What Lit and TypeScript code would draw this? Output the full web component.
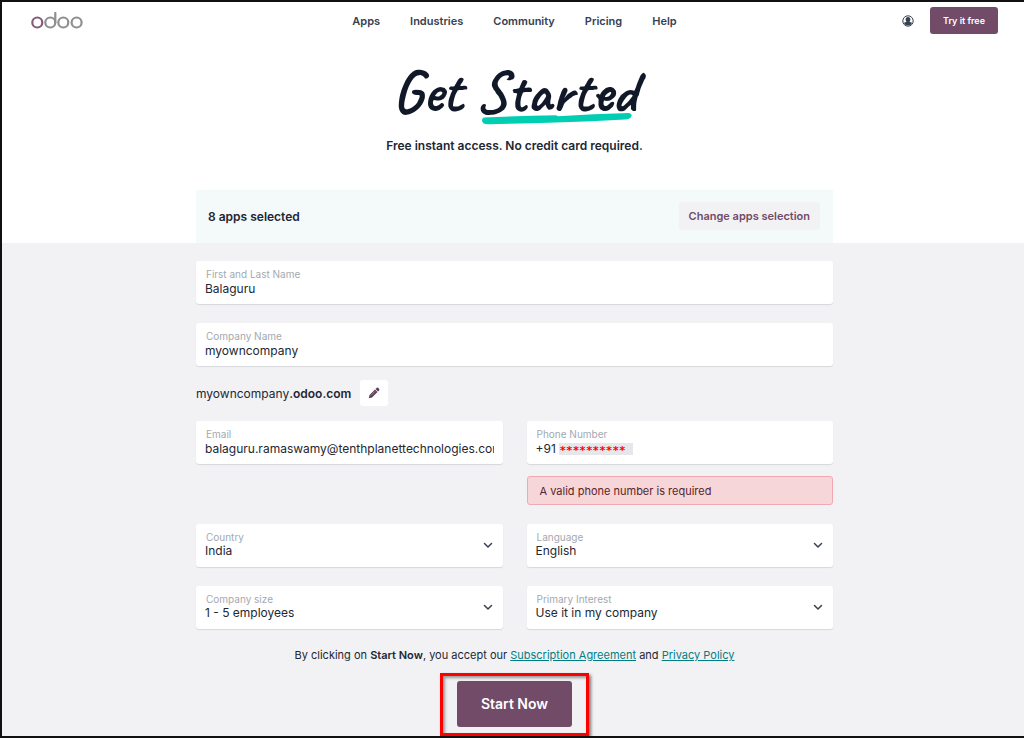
import { LitElement, html, css } from "lit";
import { customElement, property } from "lit/decorators.js";

const fieldStyles = css`
  * {
    box-sizing: border-box;
  }
  .field {
    display: block;
    padding: 7px 9px;
    border-radius: 3px;
    background: #fff;
    box-shadow: 0 1px 1px #d5d8dc;
  }
  .caption {
    display: block;
    padding-left: 1px;
    font-size: 10px;
    line-height: 13px;
    color: #a3a9b1;
  }
  .control {
    display: block;
    width: 100%;
    height: 16px;
    margin: 0;
    padding: 0;
    border: 0;
    outline: 0;
    border-radius: 0;
    background: transparent;
    font: 400 12px/16px Inter, sans-serif;
    color: #212733;
  }
`;

@customElement("text-field")
export class TextField extends LitElement {
  @property() label = "";
  @property() value = "";
  @property() type = "text";

  static styles = [fieldStyles, css`:host { display: block; }`];

  render() {
    return html`<label class="field" for="control">
      <span class="caption">${this.label}</span>
      <input class="control" id="control" type=${this.type} .value=${this.value} />
    </label>`;
  }
}

@customElement("phone-field")
export class PhoneField extends LitElement {
  static styles = [
    fieldStyles,
    css`
      :host {
        display: block;
      }
      .row {
        display: flex;
        align-items: center;
      }
      .prefix {
        width: 23px;
        flex: none;
      }
      .mask {
        height: 12px;
        padding: 0 7px 0 1px;
        background: #e6e7ea;
        color: #f00;
        font: 700 11px/16px "DejaVu Sans Mono", monospace;
      }
    `,
  ];

  render() {
    return html`<div class="field">
      <label class="caption" for="phone">Phone Number</label>
      <div class="row">
        <input class="control prefix" id="phone" type="tel" .value=${"+91"} />
        <span class="mask">**********</span>
      </div>
    </div>`;
  }
}

@customElement("select-field")
export class SelectField extends LitElement {
  @property() label = "";
  @property() value = "";

  static styles = [
    fieldStyles,
    css`
      :host {
        display: block;
      }
      .field {
        display: grid;
        grid-template-columns: 1fr 10px;
        align-items: center;
        padding: 7px 10px 9px 9px;
      }
      .caption,
      .control {
        grid-column: 1;
      }
      .control {
        appearance: none;
        height: 14px;
        line-height: 14px;
      }
      .chevron {
        grid-column: 2;
        grid-row: 1 / 3;
        width: 10px;
        height: 8px;
      }
    `,
  ];

  render() {
    return html`<label class="field" for="control">
      <span class="caption">${this.label}</span>
      <select class="control" id="control">
        <option>${this.value}</option>
      </select>
      <svg class="chevron" viewBox="0 0 10 8" fill="none">
        <path d="M1.500 2.500 5 6 8.500 2.500" stroke="#374151" stroke-width="1.500" stroke-linecap="round" stroke-linejoin="round" />
      </svg>
    </label>`;
  }
}

const logo = html`<svg class="logo" viewBox="0 0 52 18" fill="none" stroke-width="2.2">
  <g stroke="#8f8f8f">
    <circle cx="19.3" cy="10.500" r="5" />
    <path d="M24.300 1v9.500" stroke-linecap="round" />
    <circle cx="32.300" cy="10.500" r="5" />
    <circle cx="45.600" cy="10.500" r="5" />
  </g>
  <circle cx="6.300" cy="10.500" r="5" stroke="#875a7b" />
</svg>`;

const userIcon = html`<svg class="user" viewBox="0 0 12 12">
  <circle cx="6" cy="6" r="5.2" fill="#fff" stroke="#374151" stroke-width="1" />
  <path d="M6 2.100c1.500 0 2.400 1 2.400 2.400 0 1-.5 1.900-1.100 2.300.9.300 2.200.6 2.800 1.300A4.600 4.600 0 0 1 6 10.600a4.600 4.600 0 0 1-4.100-2.500c.6-.7 1.900-1 2.800-1.300-.6-.4-1.100-1.300-1.100-2.300 0-1.400.9-2.400 2.400-2.400Z" fill="#374151" />
</svg>`;

const pencil = html`<svg class="pencil" viewBox="0 0 12 12" fill="#5f3d57">
  <path d="M.8 11.200 1.500 8 7 2.500 9.500 5 4 10.500Z" />
  <path d="M7.500 2 8.800.8q.7-.5 1.300 0l1.100 1.100q.5.6 0 1.300L10 4.500Z" />
  <path d="m2.900 8.500 4.200-4.200" stroke="#c9b7c4" stroke-width=".6" />
</svg>`;

const links = ["Apps", "Industries", "Community", "Pricing", "Help"];

@customElement("app-root")
export class AppRoot extends LitElement {
  static styles = css`
    * {
      box-sizing: border-box;
    }
    :host {
      display: flex;
      flex-direction: column;
      min-height: 100vh;
      box-sizing: border-box;
      border: 2px solid #111;
      border-right: 0;
      background: #f2f2f5;
      font-family: Inter, sans-serif;
      color: #212733;
      overflow: hidden;
    }
    .top {
      background: #fff;
      padding-left: 3px;
    }
    .bar {
      display: grid;
      grid-template-columns: 1fr auto 1fr;
      align-items: center;
      padding: 5px 26px 0;
    }
    .logo {
      width: 52px;
      height: 18px;
      display: block;
    }
    .nav {
      display: flex;
      gap: 30px;
    }
    .nav a {
      font-size: 11px;
      line-height: 16px;
      font-weight: 600;
      color: #374151;
      text-decoration: none;
    }
    .actions {
      display: flex;
      justify-content: flex-end;
      align-items: center;
      gap: 16px;
    }
    button {
      border: 0;
      margin: 0;
      font-family: inherit;
      border-radius: 3px;
    }
    .account {
      padding: 0;
      background: none;
    }
    .user {
      display: block;
      width: 12px;
      height: 12px;
    }
    .try {
      padding: 6px 13px;
      background: #714b67;
      color: #fff;
      font-size: 9px;
      line-height: 15px;
      font-weight: 600;
    }
    .hero {
      display: flex;
      flex-direction: column;
      align-items: center;
      padding: 27px 0 36px;
    }
    .title {
      margin: 0;
      font: 700 60px/60px Caveat, cursive;
      color: #111827;
    }
    .marked {
      position: relative;
    }
    .stroke {
      position: absolute;
      left: 5px;
      bottom: 4px;
      width: 150px;
      height: 13px;
    }
    .lead {
      margin: 17px 0 0;
      font-size: 12px;
      line-height: 16px;
      font-weight: 600;
    }
    .wrap {
      width: calc(100% - 32px);
      max-width: 637px;
      margin: 0 auto;
    }
    .summary {
      display: flex;
      align-items: center;
      justify-content: space-between;
      padding: 12px 13px 13px 12px;
      background: #f4f9fa;
      font-size: 12px;
      font-weight: 600;
    }
    .change {
      padding: 6px 10px;
      background: #f2f2f5;
      color: #714b67;
      font-size: 11px;
      line-height: 16px;
      font-weight: 600;
    }
    .bottom {
      padding: 18px 0 0 3px;
    }
    .form {
      display: grid;
      grid-template-columns: 1fr 1fr;
      column-gap: 24px;
      row-gap: 19px;
      align-items: start;
    }
    .wide {
      grid-column: 1 / -1;
    }
    .domain {
      display: flex;
      align-items: center;
      gap: 9px;
      margin: -5px 0 -4px;
      font-size: 12px;
    }
    b {
      font-weight: 600;
    }
    .edit {
      padding: 7px 8px;
      background: #fff;
    }
    .pencil {
      display: block;
      width: 12px;
      height: 12px;
    }
    .alert {
      margin-top: 12px;
      padding: 7px 12px 5px;
      border: 1px solid #f0a9b0;
      border-radius: 3px;
      background: #f6d6d9;
      color: #58252b;
      font-size: 11px;
      line-height: 15px;
    }
    .terms {
      margin: 18px 0 10px;
      font-size: 11px;
      line-height: 16px;
      text-align: center;
    }
    .terms a {
      color: #017e84;
    }
    .frame {
      width: fit-content;
      margin: 0 auto;
      padding: 5px 14px 6px;
      border: 3px solid #f00;
      box-shadow: 2px 2px 3px #777, inset 2px 2px 3px #999;
    }
    .start {
      display: block;
      padding: 13px 24px;
      background: #714b67;
      color: #fff;
      font-size: 14px;
      line-height: 20px;
      font-weight: 600;
    }
  `;

  render() {
    return html`
      <header class="top">
        <div class="bar">
          <a href="#" aria-label="Odoo">${logo}</a>
          <nav class="nav">${links.map((l) => html`<a href="#">${l}</a>`)}</nav>
          <div class="actions">
            <button class="account" aria-label="Account">${userIcon}</button>
            <button class="try">Try it free</button>
          </div>
        </div>
        <div class="hero">
          <h1 class="title">
            Get
            <span class="marked">Started<svg class="stroke" viewBox="0 0 150 13" preserveAspectRatio="none">
              <path d="M2 5.500Q38 4 74 3.200l2 1Q112 2 147 1q4 1 2 4-1 2-6 2.600Q110 9.500 74 10.500 40 11.500 6 12.300 0 12 0 8.500 0 6 2 5.500Z" fill="#00ceb3" />
            </svg></span>
          </h1>
          <p class="lead">Free instant access. No credit card required.</p>
        </div>
        <div class="wrap summary">
          <span>8 apps selected</span>
          <button class="change">Change apps selection</button>
        </div>
      </header>
      <main class="bottom">
        <form class="wrap">
          <div class="form">
            <text-field class="wide" label="First and Last Name" value="Balaguru"></text-field>
            <text-field class="wide" label="Company Name" value="myowncompany"></text-field>
            <div class="wide domain">
              <span>myowncompany<b>.odoo.com</b></span>
              <button class="edit" type="button" aria-label="Edit domain">${pencil}</button>
            </div>
            <text-field label="Email" type="email" value="balaguru.ramaswamy@tenthplanettechnologies.com"></text-field>
            <div>
              <phone-field></phone-field>
              <div class="alert" role="alert">A valid phone number is required</div>
            </div>
            <select-field label="Country" value="India"></select-field>
            <select-field label="Language" value="English"></select-field>
            <select-field label="Company size" value="1 - 5 employees"></select-field>
            <select-field label="Primary Interest" value="Use it in my company"></select-field>
          </div>
          <p class="terms">
            By clicking on <b>Start Now</b>, you accept our <a href="#">Subscription Agreement</a> and
            <a href="#">Privacy Policy</a>
          </p>
          <div class="frame"><button class="start" type="button">Start Now</button></div>
        </form>
      </main>
    `;
  }
}
